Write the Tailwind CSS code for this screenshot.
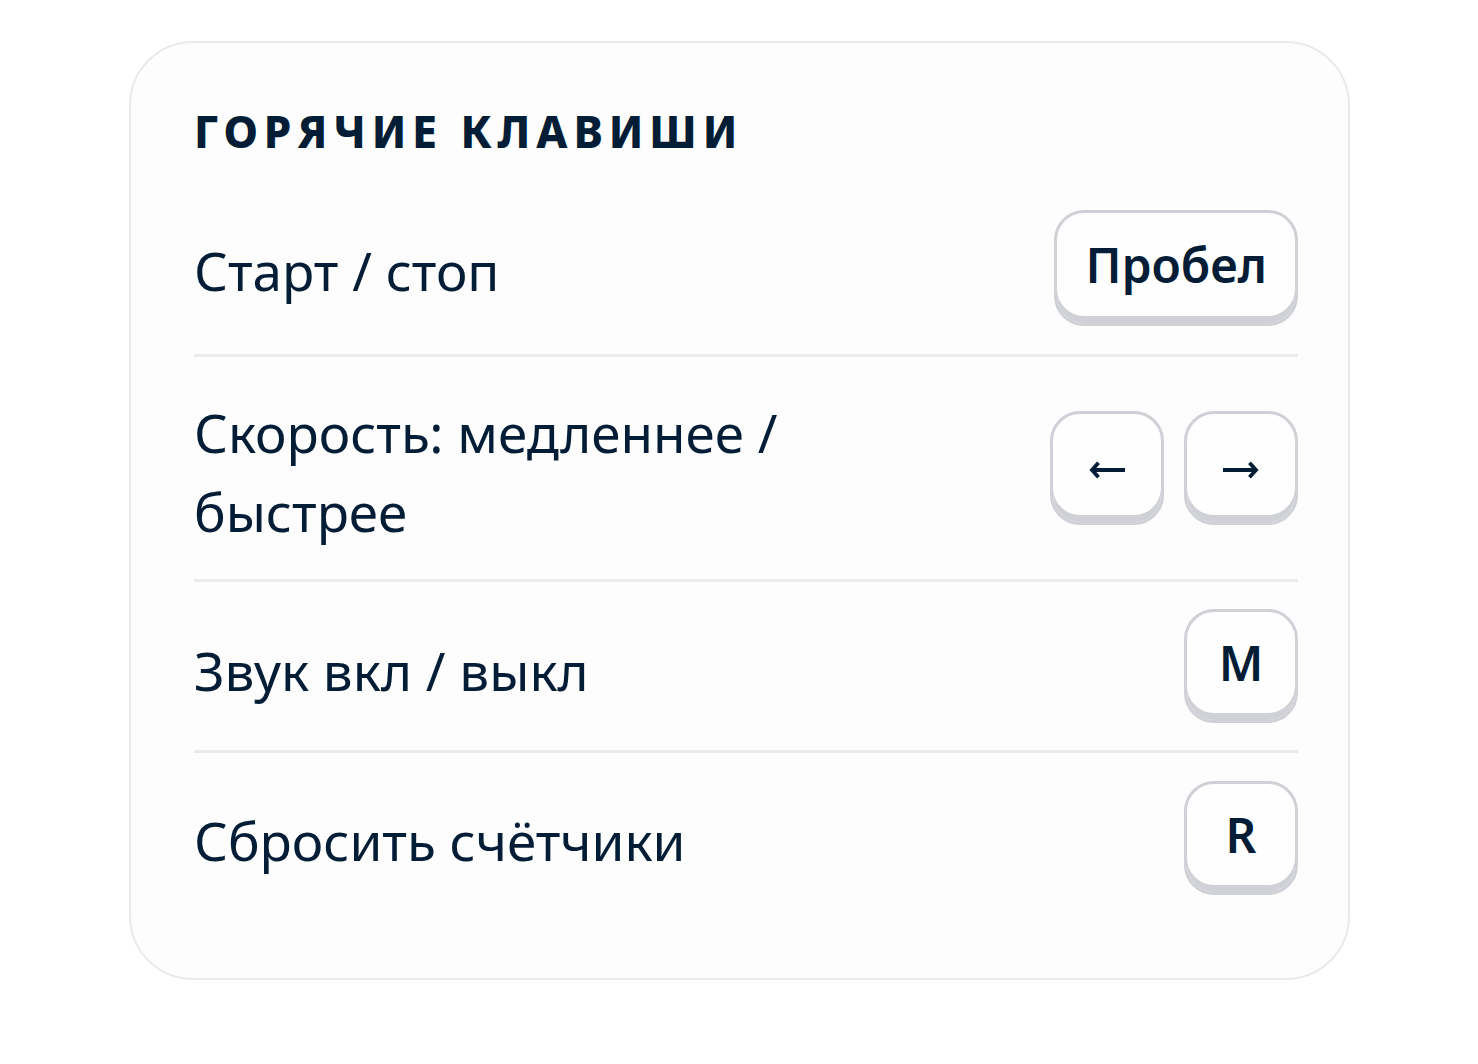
<!DOCTYPE html>
<html lang="ru">
<head>
<meta charset="utf-8">
<title>Горячие клавиши</title>
<script src="https://cdn.jsdelivr.net/npm/@tailwindcss/browser@4"></script>
</head>
<body class="bg-white px-32 pt-10 font-['Noto_Sans','Open_Sans',sans-serif] text-[#021d35]">
<section class="mt-px ml-px rounded-[64px] border-2 border-[#e9eaeb] bg-[#fdfdfd] pt-[58px] pr-[50px] pb-[55px] pl-[63px]">
  <h2 class="text-[44px] leading-[60px] font-extrabold tracking-[6px] uppercase">Горячие клавиши</h2>
  <dl class="divide-y-3 divide-[#e9eaec]">
    <div class="flex items-center justify-between pt-[49px] pb-7">
      <dt class="pt-1 text-[53px] leading-[79px]">Старт / стоп</dt>
      <dd><kbd class="flex h-[116px] items-center justify-center rounded-[30px] border-3 border-[#cfd1d7] bg-[#fefefe] px-7 pb-[7px] font-['Noto_Sans',sans-serif] text-[48px] font-semibold shadow-[inset_0_-7px_0_#cfd1d7]">Пробел</kbd></dd>
    </div>
    <div class="flex items-center justify-between py-7">
      <dt class="w-[620px] pt-2 text-[53px] leading-[79px]">Скорость: медленнее / быстрее</dt>
      <dd class="flex gap-5">
        <kbd aria-label="Стрелка влево" class="flex size-[114px] items-center justify-center rounded-[30px] border-3 border-[#cfd1d7] bg-[#fefefe] pt-1 shadow-[inset_0_-7px_0_#cfd1d7]">
          <svg class="h-[18px] w-9" viewBox="0 0 36 18" fill="none" stroke="currentColor" stroke-width="3.8"><path d="M36 9H3"/><path d="M9.5 1.8 3 9l6.500 7.200"/></svg>
        </kbd>
        <kbd aria-label="Стрелка вправо" class="flex size-[114px] items-center justify-center rounded-[30px] border-3 border-[#cfd1d7] bg-[#fefefe] pt-1 shadow-[inset_0_-7px_0_#cfd1d7]">
          <svg class="h-[18px] w-9" viewBox="0 0 36 18" fill="none" stroke="currentColor" stroke-width="3.8"><path d="M0 9h33"/><path d="M26.500 1.800 33 9l-6.500 7.200"/></svg>
        </kbd>
      </dd>
    </div>
    <div class="flex items-center justify-between py-[27px]">
      <dt class="pt-2 text-[53px] leading-[79px]">Звук вкл / выкл</dt>
      <dd><kbd class="flex size-[114px] items-center justify-center rounded-[30px] border-3 border-[#cfd1d7] bg-[#fefefe] pb-[7px] font-['Noto_Sans',sans-serif] text-[48px] font-semibold shadow-[inset_0_-7px_0_#cfd1d7]">M</kbd></dd>
    </div>
    <div class="flex items-center justify-between py-7">
      <dt class="pt-1 text-[53px] leading-[79px]">Сбросить счётчики</dt>
      <dd><kbd class="flex size-[114px] items-center justify-center rounded-[30px] border-3 border-[#cfd1d7] bg-[#fefefe] pb-[7px] font-['Noto_Sans',sans-serif] text-[48px] font-semibold shadow-[inset_0_-7px_0_#cfd1d7]">R</kbd></dd>
    </div>
  </dl>
</section>
</body>
</html>
